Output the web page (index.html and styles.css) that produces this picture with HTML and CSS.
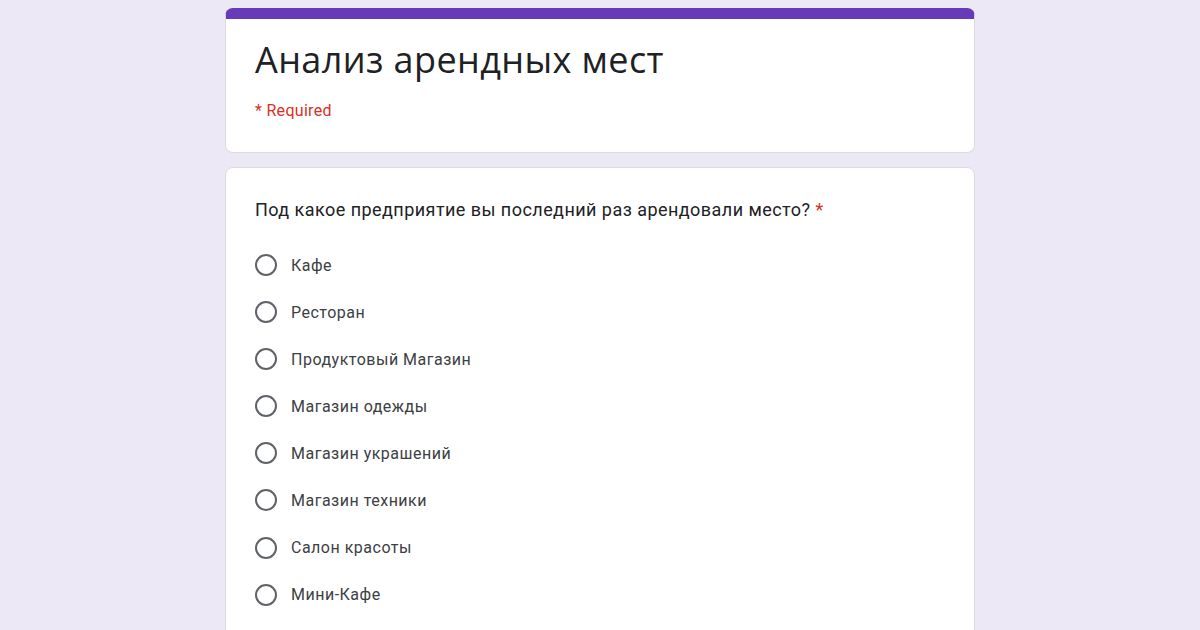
FILE: index.html
```html
<!DOCTYPE html>
<html lang="ru">
<head>
  <meta charset="UTF-8">
  <title>Анализ арендных мест</title>
  <link rel="stylesheet" href="styles.css">
</head>
<body>
  <div class="form">
    <div class="card header-card">
      <div class="title">Анализ арендных мест</div>
      <div class="required">* Required</div>
    </div>

    <div class="card question-card">
      <div class="question">Под какое предприятие вы последний раз арендовали место? <span class="star">*</span></div>
      <div class="options">
        <label class="option"><span class="radio"></span>Кафе</label>
        <label class="option"><span class="radio"></span>Ресторан</label>
        <label class="option"><span class="radio"></span>Продуктовый Магазин</label>
        <label class="option"><span class="radio"></span>Магазин одежды</label>
        <label class="option"><span class="radio"></span>Магазин украшений</label>
        <label class="option"><span class="radio"></span>Магазин техники</label>
        <label class="option"><span class="radio"></span>Салон красоты</label>
        <label class="option"><span class="radio"></span>Мини-Кафе</label>
        <label class="option"><span class="radio"></span>Другое</label>
      </div>
    </div>
  </div>
</body>
</html>
```

FILE: styles.css
```css
* {
  box-sizing: border-box;
}
body {
  margin: 0;
  background-color: #ede8f6;
  font-family: Roboto, "Noto Sans", sans-serif;
  height: 630px;
  overflow: hidden;
}

.form {
  width: 750px;
  padding-top: 8px;
  display: flex;
  flex-direction: column;
  gap: 14px;
  margin-left: 225px;
}

.card {
  background-color: #fff;
  border: 1px solid #dadce0;
  border-radius: 8px;
}

.header-card {
  border-top: 11px solid #673ab7;
  height: 145px;
  padding: 18px 29px 0 29px;
}
.title {
  font-family: "Open Sans", Roboto, sans-serif;
  font-size: 36px;
  color: #202124;
  line-height: 46px;
  letter-spacing: 0.4px;
}
.required {
  margin-top: 18px;
  font-size: 16px;
  color: #d93025;
  letter-spacing: 0.3px;
}

.question-card {
  padding: 30px 29px 0 29px;
  height: 500px;
}
.question {
  font-size: 18px;
  color: #202124;
  line-height: 24px;
  letter-spacing: 0.45px;
}
.star {
  color: #d93025;
}

.options {
  display: flex;
  flex-direction: column;
  gap: 23.1px;
  margin-top: 31px;
}
.option {
  display: flex;
  align-items: center;
  gap: 14px;
  font-size: 16px;
  color: #3c4043;
  height: 24px;
  letter-spacing: 0.5px;
}
.radio {
  width: 22px;
  height: 22px;
  border: 2px solid #5f6368;
  border-radius: 50%;
  flex-shrink: 0;
}
```
